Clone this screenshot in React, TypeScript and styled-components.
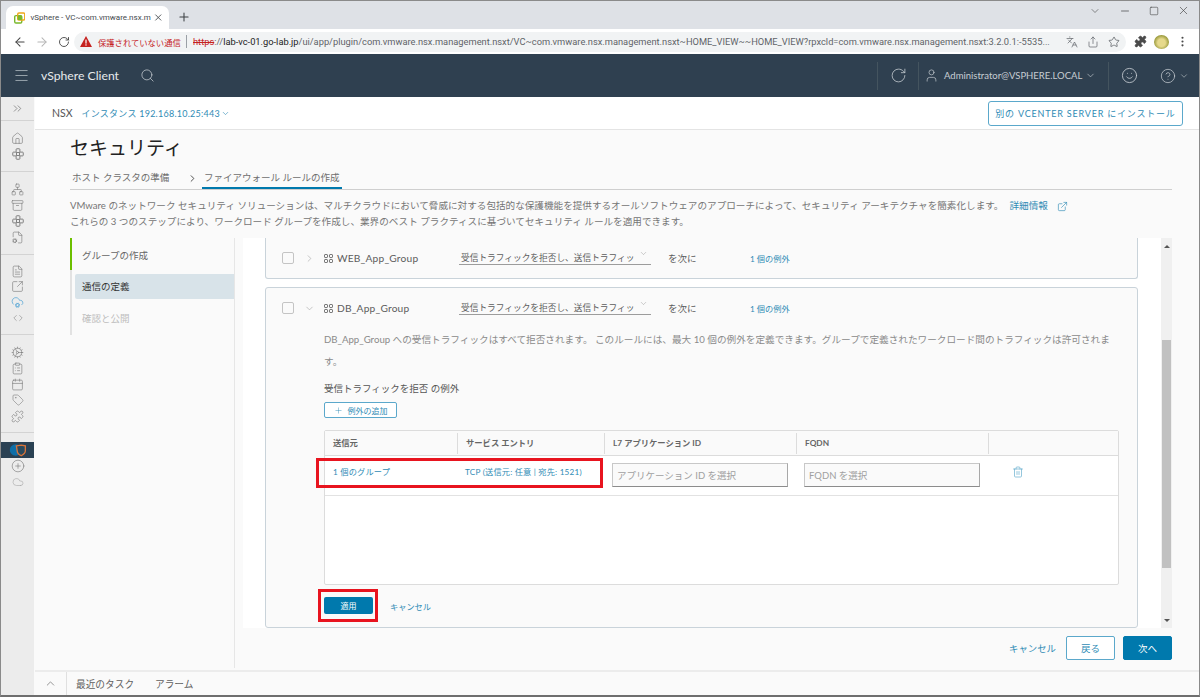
import React, { FC, ReactElement, ReactNode } from "react";
import styled, { createGlobalStyle } from "styled-components";
import {
  ArrowLeft,
  ArrowRight,
  ChevronDown,
  ChevronRight,
  ChevronUp,
  ChevronsRight,
  Code,
  ExternalLink,
  Minus,
  MoreVertical,
  Plus,
  Puzzle,
  RotateCw,
  Search,
  Share,
  Smile,
  Square,
  Star,
  Tag,
  Trash2,
  User,
  X,
  Home,
  Calendar,
  ClipboardList,
  CirclePlus,
  CircleHelp,
  Network,
  FileCog,
  Languages,
  Menu,
  FileText,
  SquareArrowOutUpRight,
  CloudCog,
  Cog,
  Cloud,
  Archive,
} from "lucide-react";

const UI_FONT = `Roboto, "Noto Sans CJK JP", sans-serif`;
const APP_FONT = `Lato, "Noto Sans CJK JP", sans-serif`;
const BLUE = "#0079ad";
const LINK = "#2f8bb5";

const GlobalStyle = createGlobalStyle`
  html, body {
    margin: 0;
    padding: 0;
    background: #fff;
    font-family: ${APP_FONT};
  }
  * { box-sizing: border-box; }
`;

const DiamondIcon: FC = () => (
  <svg width="12" height="12" viewBox="0 0 16 16" fill="none" stroke="#7d7d7d" strokeWidth="1.3">
    <rect x="5.5" y="1" width="5" height="5" rx="1" />
    <rect x="1" y="5.5" width="5" height="5" rx="1" />
    <rect x="10" y="5.5" width="5" height="5" rx="1" />
    <rect x="5.5" y="10" width="5" height="5" rx="1" />
  </svg>
);

const GroupIcon: FC = () => (
  <svg width="9" height="9" viewBox="0 0 9 9" fill="none" stroke="#666" strokeWidth="1">
    <rect x="0.5" y="0.5" width="3" height="3" rx="0.7" />
    <rect x="5.5" y="0.5" width="3" height="3" rx="0.7" />
    <rect x="0.5" y="5.5" width="3" height="3" rx="0.7" />
    <rect x="5.5" y="5.5" width="3" height="3" rx="0.7" />
  </svg>
);

const Favicon: FC = () => (
  <svg width="12" height="12" viewBox="0 0 13 13" fill="none">
    <rect x="0.8" y="3.8" width="8" height="8.4" rx="1.4" stroke="#79b82c" strokeWidth="1.6" />
    <rect x="4.2" y="0.8" width="8" height="8" rx="1.4" stroke="#f0a81c" strokeWidth="1.6" />
    <rect x="4.2" y="3.8" width="4.6" height="5" fill="#79b82c" />
  </svg>
);

const WarnIcon: FC = () => (
  <svg width="12" height="11" viewBox="0 0 12 11">
    <path d="M6 0 L12 11 H0 Z" fill="#c5221f" />
    <rect x="5.4" y="3.6" width="1.2" height="4" fill="#fff" />
    <rect x="5.4" y="8.3" width="1.2" height="1.3" fill="#fff" />
  </svg>
);

const ShieldIcon: FC = () => (
  <svg width="18" height="14" viewBox="0 0 22 16" fill="none">
    <circle cx="8" cy="8" r="7" fill="#0f6fa8" />
    <path d="M9 3 L15 2 L20 3 V9 C20 12 17 14 15 15 C12.5 14 10 12 10 9 Z" fill="#2c4a5c" stroke="#d9743a" strokeWidth="1.6" />
  </svg>
);

const AvatarDot = styled.span`
  width: 15px;
  height: 14px;
  border-radius: 50%;
  background: radial-gradient(circle at 50% 55%, #e6d98c 0 35%, #9a9a3c 70%, #6c7a2c 100%);
  display: block;
`;

const Window = styled.div`
  width: 1200px;
  height: 697px;
  display: flex;
  flex-direction: column;
  overflow: hidden;
  border-top: 1px solid #8a8a8a;
  border-left: 1px solid #8a8a8a;
  border-bottom: 2px solid #6e6e6e;
  border-right: 1px solid #8a8a8a;
`;

const TabStrip = styled.div`
  height: 28px;
  flex: none;
  background: #dee1e6;
  display: flex;
  align-items: flex-end;
  padding-left: 5px;
  font-family: ${UI_FONT};
`;

const BrowserTab = styled.div`
  width: 163px;
  height: 23px;
  background: #fff;
  border-radius: 7px 7px 0 0;
  display: flex;
  align-items: center;
  padding: 0 5px 0 8px;
  gap: 5px;
  color: #45494e;
`;

const TabTitle = styled.span`
  width: 118px;
  white-space: nowrap;
  font-size: 8px;
`;

const NewTab = styled.span`
  display: flex;
  margin: 0 0 5px 8px;
  color: #3c4043;
`;

const WindowControls = styled.div`
  margin-left: auto;
  display: flex;
  align-items: center;
  align-self: flex-start;
  height: 19px;
  padding-right: 9px;
  gap: 18px;
  color: #444;
`;

const Toolbar = styled.div`
  height: 25px;
  flex: none;
  background: #fff;
  display: flex;
  align-items: center;
  padding-left: 8px;
  font-family: ${UI_FONT};
  color: #5f6368;
`;

const NavButton = styled.span<{ $faded?: boolean }>`
  width: 22px;
  display: flex;
  justify-content: center;
  color: ${(p) => (p.$faded ? "#b5b5b5" : "#444")};
`;

const AddressBar = styled.div`
  margin-left: -1px;
  width: 1052px;
  height: 20px;
  background: #f1f3f4;
  border-radius: 10px;
  display: flex;
  align-items: center;
  padding: 0 6px;
  font-size: 9.3px;
  white-space: nowrap;
  overflow: hidden;
`;

const NotSecure = styled.span`
  color: #c5221f;
  margin-left: 6px;
  width: 88px;
  flex: none;
  font-size: 8.3px;
`;

const AddressDivider = styled.span`
  width: 1px;
  height: 13px;
  background: #9aa0a6;
  flex: none;
  margin-right: 6px;
`;

const Strike = styled.span`
  color: #c5221f;
  text-decoration: line-through;
`;

const Host = styled.span`
  color: #222;
`;

const UrlRest = styled.span`
  color: #5f6368;
`;

const UrlText = styled.span`
  width: 866px;
  flex: none;
`;

const BarIcons = styled.span`
  display: flex;
  align-items: center;
  gap: 9px;
  color: #5f6368;
  margin-left: auto;
`;

const RightIcons = styled.div`
  display: flex;
  align-items: center;
  gap: 7px;
  margin-left: 8px;
  color: #4a4a4a;
`;

const Header = styled.header`
  height: 43px;
  flex: none;
  background: #2f4050;
  color: #d8dde1;
  display: flex;
  align-items: center;
  padding-left: 12px;
  font-family: ${APP_FONT};
`;

const Brand = styled.span`
  margin-left: 11px;
  font-size: 12.2px;
  color: #e6eaec;
  white-space: nowrap;
`;

const SearchSlot = styled.span`
  display: flex;
  margin-left: 21px;
  color: #c8ced3;
`;

const HeaderRight = styled.div`
  margin-left: auto;
  display: flex;
  align-items: center;
  height: 28px;
  color: #c8ced3;
`;

const HeaderCell = styled.div<{ $w: number; $line?: boolean }>`
  width: ${(p) => p.$w}px;
  height: 100%;
  display: flex;
  align-items: center;
  justify-content: center;
  gap: 3px;
  border-left: ${(p) => (p.$line ? "1px solid #44545f" : "none")};
`;

const UserCell = styled(HeaderCell)`
  justify-content: flex-start;
  padding-left: 5px;
`;

const UserName = styled.span`
  margin-left: 2px;
  font-size: 9.5px;
  white-space: nowrap;
  color: #c8ced3;
`;

const Body = styled.div`
  flex: 1;
  min-height: 0;
  display: flex;
  background: #fafafa;
`;

const Sidebar = styled.nav`
  width: 33px;
  flex: none;
  background: #ececec;
  display: flex;
  flex-direction: column;
  color: #7d7d7d;
`;

const SideIcon = styled.div<{ $active?: boolean }>`
  height: 16px;
  flex: none;
  display: flex;
  align-items: center;
  justify-content: center;
  background: ${(p) => (p.$active ? "#2a4153" : "transparent")};
`;

const SideSection = styled.div<{ $h: number; $tight?: boolean }>`
  height: ${(p) => p.$h}px;
  flex: none;
  display: flex;
  flex-direction: column;
  border-bottom: 1px solid #d3d3d3;
  padding-top: 9px;
  ${SideIcon} {
    height: ${(p) => (p.$tight ? "15.3px" : "16px")};
  }
`;

const SideTop = styled.div`
  height: 24px;
  flex: none;
  display: flex;
  align-items: center;
  justify-content: center;
  border-bottom: 1px solid #d3d3d3;
  color: #666;
`;

const SideTail = styled.div`
  padding-top: 9px;
  display: flex;
  flex-direction: column;
`;

const Main = styled.main`
  flex: 1;
  min-width: 0;
  margin-left: 1px;
  display: flex;
  flex-direction: column;
`;

const InstanceBar = styled.div`
  height: 33px;
  flex: none;
  background: #fff;
  border-bottom: 1px solid #e4e4e4;
  display: flex;
  align-items: center;
  padding: 0 16px 0 17px;
  font-size: 10.5px;
`;

const ProductName = styled.span`
  color: #565656;
  margin-right: 9px;
`;

const InstanceLink = styled.span`
  color: ${LINK};
  display: flex;
  align-items: center;
  gap: 1px;
  font-size: 9px;
  letter-spacing: 0.25px;
`;

const InstallButton = styled.button`
  margin-left: auto;
  width: 195px;
  height: 25px;
  background: #fff;
  border: 1px solid #5ba8cb;
  border-radius: 3px;
  color: ${LINK};
  font-family: ${APP_FONT};
  font-size: 9px;
  font-weight: 400;
  letter-spacing: 0.8px;
  padding: 0;
  white-space: nowrap;
`;

const Content = styled.div`
  flex: 1;
  min-height: 0;
  display: flex;
  flex-direction: column;
  padding: 5px 27px 0 35px;
`;

const Title = styled.h1`
  margin: 0;
  font-size: 19px;
  font-weight: 400;
  line-height: 26px;
  color: #222;
`;

const Steps = styled.div`
  margin-top: 9px;
  height: 20px;
  display: flex;
  align-items: flex-start;
  border-bottom: 1px solid #cfcfcf;
  font-size: 9.5px;
  color: #6e6e6e;
`;

const StepLabel = styled.span`
  margin-left: 2px;
  width: 115px;
  line-height: 16px;
  white-space: nowrap;
`;

const StepArrow = styled.span`
  display: flex;
  height: 16px;
  align-items: center;
  color: #444;
  margin-right: 4px;
`;

const ActiveStep = styled.span`
  height: 19px;
  width: 140px;
  padding-left: 2px;
  line-height: 16px;
  border-bottom: 2px solid ${BLUE};
  white-space: nowrap;
`;

const Intro = styled.p`
  margin: 8px 0 0;
  font-size: 9.6px;
  line-height: 16px;
  color: #757575;
  white-space: nowrap;
`;

const IntroLink = styled.span`
  color: ${LINK};
  margin-left: 6px;
  display: inline-flex;
  align-items: center;
  gap: 9px;
  vertical-align: top;
`;

const Wizard = styled.div`
  margin-top: 8px;
  flex: 1;
  min-height: 0;
  margin-bottom: 2px;
  display: flex;
`;

const WizardNav = styled.div`
  width: 165px;
  flex: none;
  border-right: 1px solid #e6e6e6;
`;

const NavSteps = styled.div`
  display: flex;
  flex-direction: column;
  gap: 0;
  border-left: 2px solid #e2e2e2;
  height: 97px;
  position: relative;
  padding-left: 3px;
  padding-top: 36px;
  font-size: 9.5px;
`;

const DoneBar = styled.span`
  position: absolute;
  left: -2px;
  top: 0;
  width: 2px;
  height: 32px;
  background: #6cbf00;
`;

const NavDone = styled.div`
  position: absolute;
  top: 10px;
  left: 10px;
  color: #666;
`;

const NavCurrent = styled.div`
  height: 25px;
  line-height: 25px;
  padding-left: 7px;
  background: #d8e3e9;
  border-radius: 2px 0 0 2px;
  color: #333;
`;

const NavTodo = styled.div`
  margin-top: 7px;
  padding-left: 7px;
  line-height: 25px;
  color: #bdbdbd;
`;

const WizardMain = styled.div`
  flex: 1;
  min-width: 0;
  display: flex;
  flex-direction: column;
`;

const ScrollArea = styled.div`
  height: 390px;
  margin-left: 8px;
  display: flex;
`;

const ScrollBody = styled.div`
  width: 918px;
  flex: none;
  background: #fff;
  padding: 0 23px 0 22px;
`;

const Scrollbar = styled.div`
  width: 11px;
  flex: none;
  background: #f0f0f0;
  display: flex;
  flex-direction: column;
  align-items: center;
`;

const ScrollArrow = styled.span<{ $up?: boolean }>`
  height: 16px;
  flex: none;
  display: flex;
  align-items: center;
  &::before {
    content: "";
    border-left: 3px solid transparent;
    border-right: 3px solid transparent;
    ${(p) => (p.$up ? "border-bottom: 3px solid #555;" : "border-top: 3px solid #555;")}
  }
`;

const ScrollSpace = styled.div<{ $h: number }>`
  height: ${(p) => p.$h}px;
  flex: none;
`;

const ScrollThumb = styled.div`
  width: 9px;
  height: 228px;
  flex: none;
  background: #c1c1c1;
`;

const Card = styled.section<{ $cut?: boolean }>`
  background: #fafafa;
  border: 1px solid #c9d3da;
  border-top: ${(p) => (p.$cut ? "none" : "1px solid #c9d3da")};
  border-radius: ${(p) => (p.$cut ? "0 0 3px 3px" : "3px")};
  height: ${(p) => (p.$cut ? "41px" : "341px")};
  margin-bottom: 8px;
  padding-left: 16px;
  position: relative;
`;

const CardRow = styled.div`
  display: flex;
  align-items: center;
  height: 40px;
`;

const CheckBox = styled.span`
  width: 12px;
  height: 12px;
  flex: none;
  border: 1px solid #c4c4c4;
  border-radius: 2px;
  background: #fafafa;
`;

const ToggleSlot = styled.span`
  width: 30px;
  flex: none;
  display: flex;
  justify-content: center;
  color: #9a9a9a;
`;

const GroupName = styled.span`
  width: 122px;
  margin-left: 4px;
  flex: none;
  font-size: 10.2px;
  color: #5c5c5c;
  letter-spacing: 0.2px;
  white-space: nowrap;
`;

const RuleSelect = styled.div`
  width: 192px;
  height: 13px;
  flex: none;
  margin-left: 0;
  border-bottom: 1px solid #9c9c9c;
  display: flex;
  align-items: flex-start;
  padding-left: 2px;
  font-size: 8.7px;
  line-height: 12px;
  color: #5c5c5c;
  position: relative;
`;

const SelectText = styled.span`
  width: 176px;
  white-space: nowrap;
`;

const SelectChevron = styled.span`
  display: flex;
  color: #8f8f8f;
  margin-left: 2px;
  margin-top: -3px;
`;

const NextLabel = styled.span`
  margin-left: 17px;
  width: 82px;
  flex: none;
  font-size: 9.5px;
  color: #5c5c5c;
`;

const ExceptionLink = styled.span`
  font-size: 8.2px;
  color: ${LINK};
  white-space: nowrap;
`;

const CardBody = styled.div`
  padding: 0 17px 0 42px;
`;

const RuleNote = styled.p`
  margin: 0;
  width: 792px;
  font-size: 9.65px;
  line-height: 22px;
  color: #8a8a8a;
`;

const SectionHead = styled.h3`
  margin: 9px 0 0;
  font-size: 9.5px;
  font-weight: 400;
  line-height: 16px;
  color: #555;
`;

const AddButton = styled.button`
  margin-top: 5px;
  width: 73px;
  height: 16px;
  display: flex;
  align-items: center;
  justify-content: center;
  gap: 5px;
  background: #fff;
  border: 1px solid #5ba8cb;
  border-radius: 2px;
  padding: 0;
  color: ${LINK};
  font-family: ${APP_FONT};
  font-size: 8px;
`;

const Table = styled.div`
  margin-top: 12px;
  width: 795px;
  height: 155px;
  background: #fff;
  border: 1px solid #dcdcdc;
  border-radius: 2px;
  display: flex;
  flex-direction: column;
`;

const GRID = "132px 147px 192px 192px 1fr";

const TableHead = styled.div`
  height: 25px;
  flex: none;
  display: grid;
  grid-template-columns: ${GRID};
  align-items: center;
  background: #fafafa;
  border-bottom: 1px solid #dcdcdc;
`;

const HeadCell = styled.div<{ $first?: boolean }>`
  height: 21px;
  line-height: 21px;
  padding-left: 8px;
  border-left: ${(p) => (p.$first ? "none" : "1px solid #dcdcdc")};
  font-size: 8.3px;
  font-weight: 700;
  color: #666;
`;

const TableRow = styled.div`
  height: 40px;
  flex: none;
  display: grid;
  grid-template-columns: ${GRID};
  border-bottom: 1px solid #e2e2e2;
  position: relative;
`;

const RowCell = styled.div`
  padding: 9px 0 0 8px;
  font-size: 8.2px;
  line-height: 14px;
  color: ${LINK};
  white-space: nowrap;
  letter-spacing: 0.2px;
`;

const InputCell = styled.div`
  padding: 7px 0 0 8px;
`;

const TextInput = styled.div`
  width: 176px;
  height: 24px;
  padding-left: 4px;
  line-height: 23px;
  background: #fafafa;
  border: 1px solid #c8c8c8;
  border-bottom: 1px solid #8c8c8c;
  border-right: 1px solid #a8a8a8;
  font-size: 9.5px;
  color: #a0a0a0;
  white-space: nowrap;
`;

const TrashCell = styled.div`
  padding: 6px 0 0 24px;
  color: #5ba8cb;
`;

const RedFrame = styled.span<{ $l: number; $t: number; $w: number; $h: number }>`
  position: absolute;
  left: ${(p) => p.$l}px;
  top: ${(p) => p.$t}px;
  width: ${(p) => p.$w}px;
  height: ${(p) => p.$h}px;
  border: 3px solid #e8141f;
  pointer-events: none;
`;

const CardActions = styled.div`
  margin-top: 12px;
  display: flex;
  align-items: center;
  position: relative;
`;

const ApplyButton = styled.button`
  width: 49px;
  height: 17px;
  background: ${BLUE};
  border: none;
  border-radius: 2px;
  color: #fff;
  font-family: ${APP_FONT};
  font-size: 8px;
  padding: 0;
`;

const TextLink = styled.span<{ $size: number }>`
  color: ${LINK};
  font-size: ${(p) => p.$size}px;
  white-space: nowrap;
`;

const CardCancel = styled.span`
  margin-left: 17px;
  display: flex;
`;

const WizardFooter = styled.div`
  height: 40px;
  display: flex;
  align-items: center;
  justify-content: flex-end;
`;

const FooterButton = styled.button<{ $primary?: boolean }>`
  width: 49px;
  height: 24px;
  margin-left: ${(p) => (p.$primary ? "8px" : "10px")};
  border-radius: 2px;
  padding: 0;
  font-family: ${APP_FONT};
  font-size: 9.5px;
  background: ${(p) => (p.$primary ? BLUE : "#fff")};
  border: 1px solid ${(p) => (p.$primary ? BLUE : "#5ba8cb")};
  color: ${(p) => (p.$primary ? "#fff" : LINK)};
`;

const BottomBar = styled.footer`
  height: 25px;
  flex: none;
  border-top: 2px solid #ececec;
  background: #fafafa;
  display: flex;
  align-items: center;
  font-size: 9.7px;
  color: #5f5f5f;
  margin-top: auto;
`;

const Collapse = styled.span`
  width: 32px;
  height: 100%;
  display: flex;
  align-items: center;
  justify-content: center;
  border-right: 1px solid #e0e0e0;
  color: #777;
`;

const BottomTab = styled.span<{ $w: number }>`
  margin-left: 9px;
  width: ${(p) => p.$w}px;
  white-space: nowrap;
`;

const SelectField: FC = (): ReactElement => (
  <RuleSelect>
    <SelectText>受信トラフィックを拒否し、送信トラフィッ</SelectText>
    <SelectChevron>
      <ChevronDown size={9} strokeWidth={1.2} />
    </SelectChevron>
  </RuleSelect>
);

type GroupRowProps = {
  name: string;
  open?: boolean;
};

const GroupRow: FC<GroupRowProps> = ({ name, open }): ReactElement => (
  <CardRow>
    <CheckBox />
    <ToggleSlot>
      {open ? <ChevronDown size={11} strokeWidth={1.2} /> : <ChevronRight size={11} strokeWidth={1.2} />}
    </ToggleSlot>
    <GroupIcon />
    <GroupName>{name}</GroupName>
    <SelectField />
    <NextLabel>を次に</NextLabel>
    <ExceptionLink>1 個の例外</ExceptionLink>
  </CardRow>
);

const side = (icon: ReactNode, key: string, active?: boolean): ReactElement => (
  <SideIcon key={key} $active={active}>
    {icon}
  </SideIcon>
);

const ICON = { size: 13, strokeWidth: 1.2 };

export default function App(): ReactElement {
  return (
    <>
      <GlobalStyle />
      <Window>
        <TabStrip>
          <BrowserTab>
            <Favicon />
            <TabTitle>vSphere - VC~com.vmware.nsx.m</TabTitle>
            <X size={11} strokeWidth={2} />
          </BrowserTab>
          <NewTab>
            <Plus size={14} strokeWidth={1.8} />
          </NewTab>
          <WindowControls>
            <ChevronDown size={12} strokeWidth={1.2} />
            <Minus size={12} strokeWidth={1.4} />
            <Square size={10} strokeWidth={1.4} />
            <X size={13} strokeWidth={1.2} />
          </WindowControls>
        </TabStrip>
        <Toolbar>
          <NavButton>
            <ArrowLeft size={14} strokeWidth={1.8} />
          </NavButton>
          <NavButton $faded>
            <ArrowRight size={14} strokeWidth={1.8} />
          </NavButton>
          <NavButton>
            <RotateCw size={12} strokeWidth={1.8} />
          </NavButton>
          <AddressBar>
            <WarnIcon />
            <NotSecure>保護されていない通信</NotSecure>
            <AddressDivider />
            <UrlText>
              <Strike>https</Strike>
              <UrlRest>://</UrlRest>
              <Host>lab-vc-01.go-lab.jp</Host>
              <UrlRest>
                /ui/app/plugin/com.vmware.nsx.management.nsxt/VC~com.vmware.nsx.management.nsxt~HOME_VIEW~~HOME_VIEW?rpxcld=com.vmware.nsx.management.nsxt:3.2.0.1:-5535...
              </UrlRest>
            </UrlText>
            <BarIcons>
              <Languages size={12} strokeWidth={1.4} />
              <Share size={12} strokeWidth={1.4} />
              <Star size={12} strokeWidth={1.6} />
            </BarIcons>
          </AddressBar>
          <RightIcons>
            <Puzzle size={13} fill="#4a4a4a" strokeWidth={1} />
            <AvatarDot />
            <MoreVertical size={13} strokeWidth={2} />
          </RightIcons>
        </Toolbar>
        <Header>
          <Menu size={17} strokeWidth={1.2} color="#a9b3ba" />
          <Brand>vSphere Client</Brand>
          <SearchSlot>
            <Search size={15} strokeWidth={1.2} />
          </SearchSlot>
          <HeaderRight>
            <HeaderCell $w={41} $line>
              <RotateCw size={17} strokeWidth={1.1} />
            </HeaderCell>
            <UserCell $w={190} $line>
              <User size={15} strokeWidth={1.1} />
              <UserName>Administrator@VSPHERE.LOCAL</UserName>
              <ChevronDown size={11} strokeWidth={1.4} />
            </UserCell>
            <HeaderCell $w={42} $line>
              <Smile size={17} strokeWidth={1.2} />
            </HeaderCell>
            <HeaderCell $w={49}>
              <CircleHelp size={16} strokeWidth={1.1} />
              <ChevronDown size={10} strokeWidth={1.4} />
            </HeaderCell>
          </HeaderRight>
        </Header>
        <Body>
          <Sidebar>
            <SideTop>
              <ChevronsRight size={13} strokeWidth={1.2} />
            </SideTop>
            <SideSection $h={51}>
              {side(<Home {...ICON} />, "home")}
              {side(<DiamondIcon />, "shortcuts")}
            </SideSection>
            <SideSection $h={83}>
              {side(<Network {...ICON} />, "inventory")}
              {side(<Archive {...ICON} />, "content")}
              {side(<DiamondIcon />, "workload")}
              {side(<FileCog {...ICON} />, "global")}
            </SideSection>
            <SideSection $h={80} $tight>
              {side(<FileText {...ICON} />, "policies")}
              {side(<SquareArrowOutUpRight {...ICON} />, "auto")}
              {side(<CloudCog {...ICON} color="#3f9ad0" />, "hybrid")}
              {side(<Code size={10} strokeWidth={1.3} />, "dev")}
            </SideSection>
            <SideSection $h={98}>
              {side(<Cog {...ICON} />, "admin")}
              {side(<ClipboardList {...ICON} />, "tasks")}
              {side(<Calendar {...ICON} />, "events")}
              {side(<Tag size={12} strokeWidth={1.2} />, "tags")}
              {side(<Puzzle {...ICON} />, "plugins")}
            </SideSection>
            <SideTail>
              {side(<ShieldIcon />, "nsx", true)}
              {side(<CirclePlus size={14} strokeWidth={1.1} />, "add")}
              {side(<Cloud size={12} strokeWidth={1.2} color="#a8a8a8" />, "cloud")}
            </SideTail>
          </Sidebar>
          <Main>
            <InstanceBar>
              <ProductName>NSX</ProductName>
              <InstanceLink>
                インスタンス 192.168.10.25:443
                <ChevronDown size={9} strokeWidth={1.6} />
              </InstanceLink>
              <InstallButton>別の VCENTER SERVER にインストール</InstallButton>
            </InstanceBar>
            <Content>
              <Title>セキュリティ</Title>
              <Steps>
                <StepLabel>ホスト クラスタの準備</StepLabel>
                <StepArrow>
                  <ChevronRight size={11} strokeWidth={2} />
                </StepArrow>
                <ActiveStep>ファイアウォール ルールの作成</ActiveStep>
              </Steps>
              <Intro>
                VMware のネットワーク セキュリティ ソリューションは、マルチクラウドにおいて脅威に対する包括的な保護機能を提供するオールソフトウェアのアプローチによって、セキュリティ アーキテクチャを簡素化します。
                <IntroLink>
                  詳細情報
                  <ExternalLink size={11} strokeWidth={1.4} />
                </IntroLink>
                <br />
                これらの 3 つのステップにより、ワークロード グループを作成し、業界のベスト プラクティスに基づいてセキュリティ ルールを適用できます。
              </Intro>
              <Wizard>
                <WizardNav>
                  <NavSteps>
                    <DoneBar />
                    <NavDone>グループの作成</NavDone>
                    <NavCurrent>通信の定義</NavCurrent>
                    <NavTodo>確認と公開</NavTodo>
                  </NavSteps>
                </WizardNav>
                <WizardMain>
                  <ScrollArea>
                    <ScrollBody>
                      <Card $cut>
                        <GroupRow name="WEB_App_Group" />
                      </Card>
                      <Card>
                        <GroupRow name="DB_App_Group" open />
                        <CardBody>
                          <RuleNote>
                            DB_App_Group への受信トラフィックはすべて拒否されます。 このルールには、最大 10 個の例外を定義できます。グループで定義されたワークロード間のトラフィックは許可されます。
                          </RuleNote>
                          <SectionHead>受信トラフィックを拒否 の例外</SectionHead>
                          <AddButton>
                            <Plus size={9} strokeWidth={1.2} />
                            例外の追加
                          </AddButton>
                          <Table>
                            <TableHead>
                              <HeadCell $first>送信元</HeadCell>
                              <HeadCell>サービス エントリ</HeadCell>
                              <HeadCell>L7 アプリケーション ID</HeadCell>
                              <HeadCell>FQDN</HeadCell>
                              <HeadCell />
                            </TableHead>
                            <TableRow>
                              <RowCell>1 個のグループ</RowCell>
                              <RowCell>TCP (送信元: 任意 | 宛先: 1521)</RowCell>
                              <InputCell>
                                <TextInput>アプリケーション ID を選択</TextInput>
                              </InputCell>
                              <InputCell>
                                <TextInput>FQDN を選択</TextInput>
                              </InputCell>
                              <TrashCell>
                                <Trash2 size={12} strokeWidth={1.3} />
                              </TrashCell>
                              <RedFrame $l={-9} $t={2} $w={287} $h={30} />
                            </TableRow>
                          </Table>
                          <CardActions>
                            <ApplyButton>適用</ApplyButton>
                            <CardCancel>
                              <TextLink $size={8.2}>キャンセル</TextLink>
                            </CardCancel>
                            <RedFrame $l={-6} $t={-8} $w={60} $h={33} />
                          </CardActions>
                        </CardBody>
                      </Card>
                    </ScrollBody>
                    <Scrollbar>
                      <ScrollArrow $up />
                      <ScrollSpace $h={86} />
                      <ScrollThumb />
                      <ScrollSpace $h={44} />
                      <ScrollArrow />
                    </Scrollbar>
                  </ScrollArea>
                  <WizardFooter>
                    <TextLink $size={9.4}>キャンセル</TextLink>
                    <FooterButton>戻る</FooterButton>
                    <FooterButton $primary>次へ</FooterButton>
                  </WizardFooter>
                </WizardMain>
              </Wizard>
            </Content>
            <BottomBar>
              <Collapse>
                <ChevronUp size={13} strokeWidth={1.4} />
              </Collapse>
              <BottomTab $w={70}>最近のタスク</BottomTab>
              <BottomTab $w={50}>アラーム</BottomTab>
            </BottomBar>
          </Main>
        </Body>
      </Window>
    </>
  );
}
